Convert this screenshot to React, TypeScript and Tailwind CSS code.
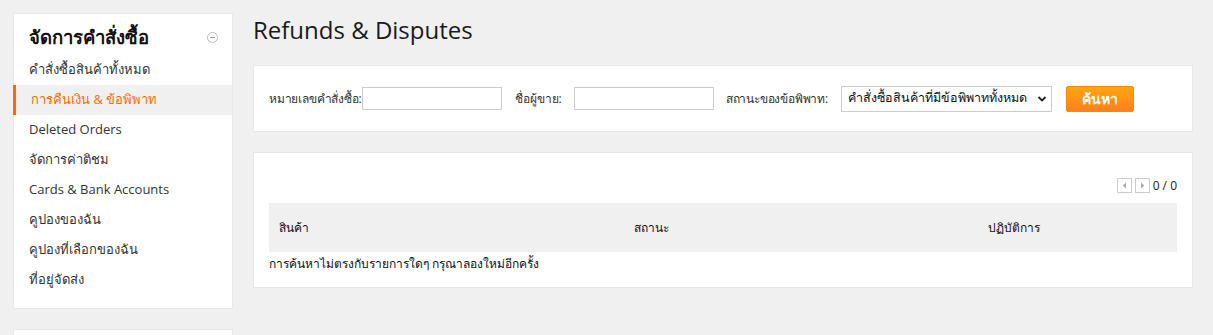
import React from 'react';

interface MenuItem {
  label: string;
  active?: boolean;
}

const menu: MenuItem[] = [
  { label: 'คำสั่งซื้อสินค้าทั้งหมด' },
  { label: 'การคืนเงิน & ข้อพิพาท', active: true },
  { label: 'Deleted Orders' },
  { label: 'จัดการค่าติชม' },
  { label: 'Cards & Bank Accounts' },
  { label: 'คูปองของฉัน' },
  { label: 'คูปองที่เลือกของฉัน' },
  { label: 'ที่อยู่จัดส่ง' },
];

const Sidebar: React.FC = () => (
  <aside className="w-[220px] shrink-0">
    <div className="bg-white border border-[#e8e8e8] pt-[11px] pb-[13px]">
      <div className="flex items-center justify-between pl-[15px] pr-[14px] h-[24px] mb-[6px]">
        <h2 className="text-[18.5px] font-bold text-[#111] leading-[24px]">จัดการคำสั่งซื้อ</h2>
        <span className="w-[11px] h-[11px] rounded-full border border-[#bbb] flex items-center justify-center">
          <span className="w-[5px] h-px bg-[#999]" />
        </span>
      </div>
      <ul>
        {menu.map((item) => (
          <li
            key={item.label}
            className={
              item.active
                ? 'h-[30px] flex items-center pl-[15px] text-[13px] text-[#ff6a00] bg-[#f0f0f0] border-l-[3px] border-[#ff6a00] -ml-px'
                : 'h-[30px] flex items-center pl-[15px] text-[13px] text-[#333]'
            }
          >
            {item.label}
          </li>
        ))}
      </ul>
    </div>
    <div className="bg-white border border-[#e8e8e8] h-[40px] mt-[20px]" />
  </aside>
);

const SearchBar: React.FC = () => (
  <div className="bg-white border border-[#e8e8e8] h-[67px] px-[15px] flex items-center text-[12px] text-[#333] whitespace-nowrap">
    <label className="flex items-center">
      <span className="tracking-[-0.2px]">หมายเลขคำสั่งซื้อ:</span>
      <input type="text" className="w-[140px] h-[23px] border border-[#ccc] outline-none" />
    </label>
    <label className="flex items-center ml-[13px]">
      <span className="mr-[12px]">ชื่อผู้ขาย:</span>
      <input type="text" className="w-[140px] h-[23px] border border-[#ccc] outline-none" />
    </label>
    <label className="flex items-center ml-[12px]">
      <span className="mr-[13px] tracking-[-0.2px]">สถานะของข้อพิพาท:</span>
      <div className="w-[211px] h-[26px] border border-[#ccc] flex items-center justify-between pl-[6px] pr-[4px] text-[12.5px] text-[#111] overflow-hidden">
        <span>คำสั่งซื้อสินค้าที่มีข้อพิพาททั้งหมด</span>
        <svg width="10" height="8" viewBox="0 0 10 8" className="shrink-0">
          <path d="M1.5 2l3.5 3.5L8.5 2" fill="none" stroke="#222" strokeWidth="1.8" />
        </svg>
      </div>
    </label>
    <button
      type="button"
      className="ml-[14px] w-[68px] h-[26px] rounded-[2px] border border-[#f08a10] bg-linear-to-b from-[#ffa60a] to-[#ff7f1e] text-white font-bold text-[14px]"
    >
      ค้นหา
    </button>
  </div>
);

const Pager: React.FC = () => (
  <div className="flex items-center justify-end h-[15px] text-[12px] text-[#222]">
    <span className="w-[15px] h-[15px] border border-[#ccc] flex items-center justify-center">
      <svg width="5" height="7" viewBox="0 0 5 7">
        <path d="M4 0.5L0.8 3.5L4 6.5z" fill="#aaa" />
      </svg>
    </span>
    <span className="w-[15px] h-[15px] border border-[#ccc] flex items-center justify-center ml-[3px]">
      <svg width="5" height="7" viewBox="0 0 5 7">
        <path d="M1 0.5L4.2 3.5L1 6.5z" fill="#aaa" />
      </svg>
    </span>
    <span className="ml-[3px] leading-[15px]">0 / 0</span>
  </div>
);

const Results: React.FC = () => (
  <div className="bg-white border border-[#e8e8e8] mt-[20px] h-[136px] px-[15px] pt-[25px]">
    <Pager />
    <div className="mt-[10px] h-[49px] bg-[#f0f0f0] grid grid-cols-[355px_354px_1fr] items-center text-[12px] text-[#111]">
      <span className="pl-[10px]">สินค้า</span>
      <span className="pl-[10px]">สถานะ</span>
      <span className="pl-[10px]">ปฏิบัติการ</span>
    </div>
    <p className="text-[12px] text-[#111] leading-[24px]">การค้นหาไม่ตรงกับรายการใดๆ กรุณาลองใหม่อีกครั้ง</p>
  </div>
);

export default function App() {
  return (
    <div
      className="h-[335px] overflow-hidden bg-[#f0f0f0] flex gap-[20px] pl-[13px] pr-[20px] pt-[13px]"
      style={{ fontFamily: "'Open Sans', Tahoma, 'Noto Sans', sans-serif" }}
    >
      <Sidebar />
      <main className="flex-1">
        <h1 className="text-[24px] leading-[32px] text-[#1a1a1a] h-[32px] mb-[19px] mt-px">Refunds &amp; Disputes</h1>
        <SearchBar />
        <Results />
      </main>
    </div>
  );
}
